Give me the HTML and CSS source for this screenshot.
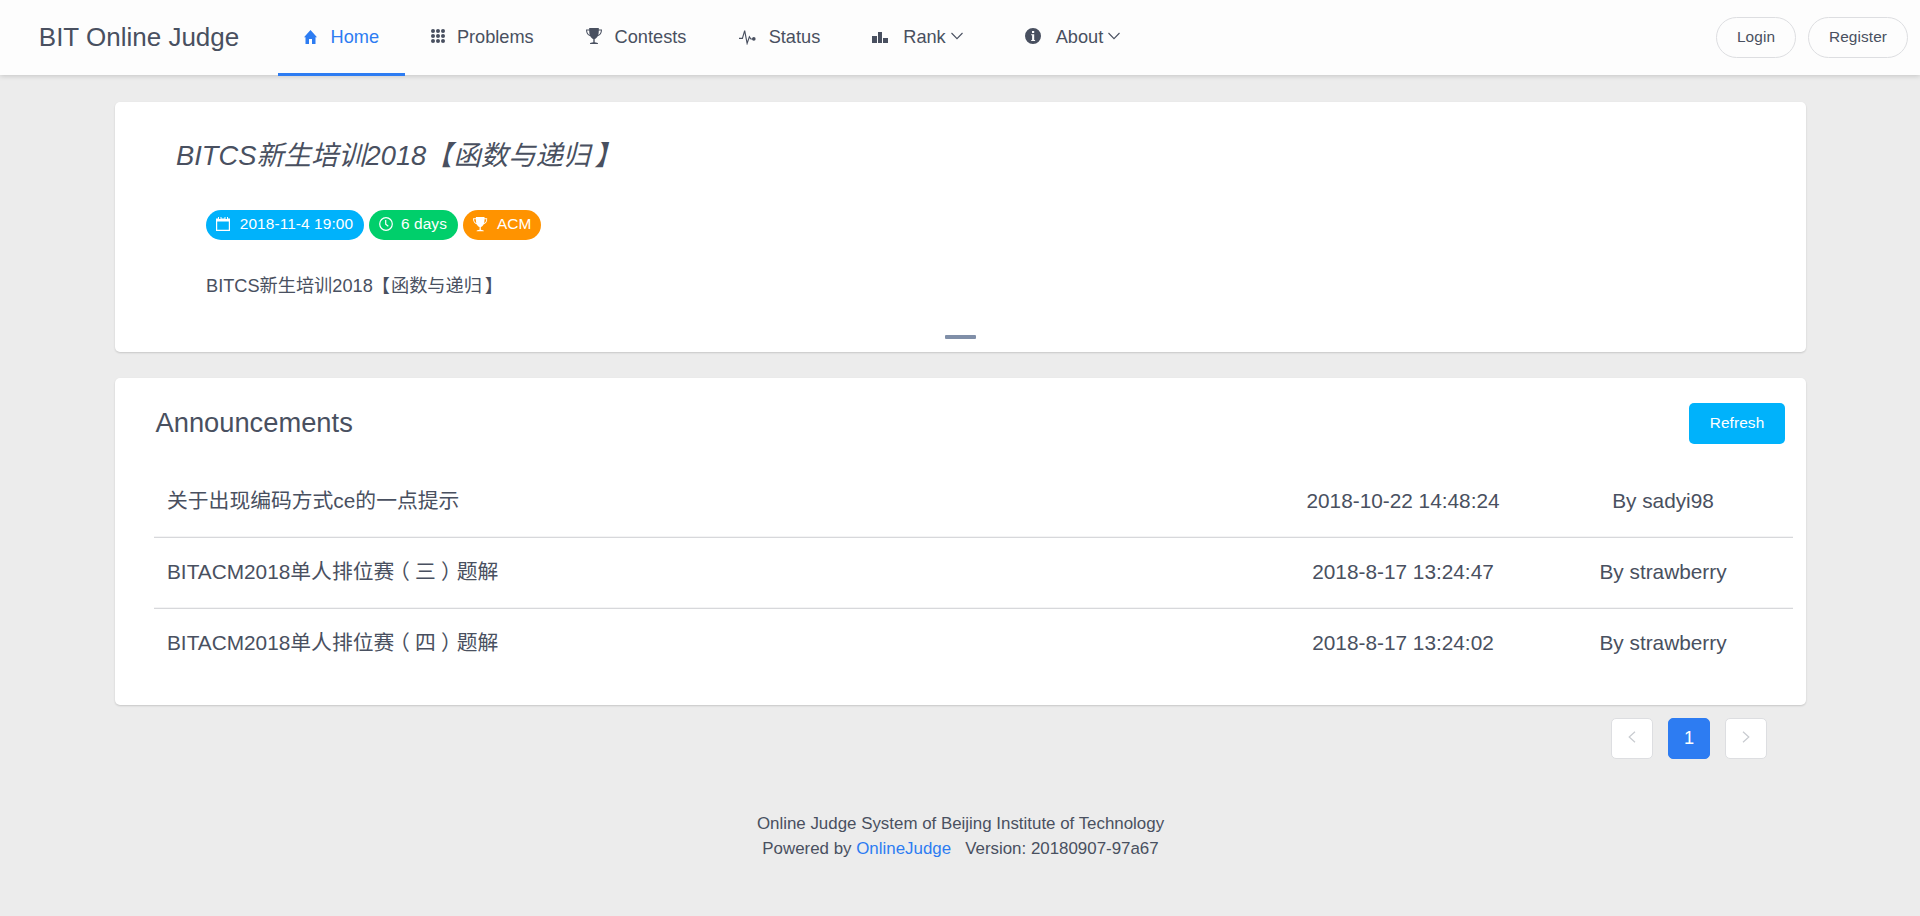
FILE: index.html
```html
<!DOCTYPE html>
<html lang="zh-CN">
<head>
<meta charset="utf-8">
<title>BIT Online Judge</title>
<link rel="stylesheet" href="styles.css">
</head>
<body>
<svg class="defs" width="0" height="0">
  <symbol id="trophy" viewBox="0 0 16 16"><path d="M3.2 0h9.6v1.5H16c0 3.600-1.500 6-4.300 6.700C10.900 9.700 9.700 10.700 8.700 11v3.200c1.700.1 3.300.6 3.300 1.400v.4H4v-.4c0-.8 1.600-1.300 3.300-1.400V11C6.300 10.700 5.100 9.700 4.300 8.200 1.500 7.500 0 5.100 0 1.500h3.200zM1.100 2.500c.2 2 1 3.600 2.600 4.400C3.300 5.600 3.200 4 3.200 2.500zm13.800 0h-2.100c0 1.500-.1 3.100-.5 4.400 1.600-.8 2.400-2.400 2.600-4.400z"/></symbol>
</svg>
<header class="header">
  <div class="brand">BIT Online Judge</div>
  <nav class="nav">
    <a class="item active"><svg class="icon home" viewBox="0 0 13 14"><path d="M6.500 0L13 7.200h-1.500V14H8V9H5v5H1.500V7.200H0z"/></svg>Home</a>
    <a class="item"><svg class="icon grid" viewBox="0 0 14 14"><g><circle cx="2" cy="2" r="2"/><circle cx="7" cy="2" r="2"/><circle cx="12" cy="2" r="2"/><circle cx="2" cy="7" r="2"/><circle cx="7" cy="7" r="2"/><circle cx="12" cy="7" r="2"/><circle cx="2" cy="12" r="2"/><circle cx="7" cy="12" r="2"/><circle cx="12" cy="12" r="2"/></g></svg>Problems</a>
    <a class="item"><svg class="icon cup"><use href="#trophy"/></svg>Contests</a>
    <a class="item"><svg class="icon pulse" viewBox="0 0 18 16"><path class="line" d="M0 9.500h3.600L6 1.200l2.600 13.600 2.400-7 1.600 2.300H15"/><circle cx="15.700" cy="10" r="1.900"/></svg>Status</a>
    <a class="item"><svg class="icon bars" viewBox="0 0 16 11"><path d="M0 4h5v7H0zM6 0h4v11H6zM11 6h5v5h-5z"/></svg>Rank<svg class="down" viewBox="0 0 12 8"><path class="line" d="M.5 1L6 6.700 11.500 1"/></svg></a>
    <a class="item about"><svg class="icon info" viewBox="0 0 16 16"><path fill-rule="evenodd" d="M8 0a8 8 0 1 0 0 16A8 8 0 0 0 8 0zM7 3h2.200v2H7zM6.200 6.200h3v5.800h.9v1H6.200v-1h.9V7.200h-.9z"/></svg>About<svg class="down" viewBox="0 0 12 8"><path class="line" d="M.5 1L6 6.700 11.500 1"/></svg></a>
  </nav>
  <div class="account"><button class="pill">Login</button><button class="pill">Register</button></div>
</header>
<main class="main">
  <section class="card contest">
    <h1 class="contest-title">BITCS新生培训2018<span class="open">【</span>函数与递归<span class="close">】</span></h1>
    <div class="tags">
      <span class="tag blue"><svg class="tag-icon" viewBox="0 0 14 14"><path fill-rule="evenodd" d="M0 1.500h2V0h1v2h1.500V0h1v1.500h3V0h1v2H11V0h1v1.500h2V14H0zM1.200 4.500v8.300h11.600V4.500z"/></svg>2018-11-4 19:00</span>
      <span class="tag green"><svg class="tag-icon" viewBox="0 0 14 14"><circle class="line" cx="7" cy="7" r="6.300"/><path class="line" d="M6.700 3v4.300l2.600 2"/></svg>6 days</span>
      <span class="tag orange"><svg class="tag-icon"><use href="#trophy"/></svg>ACM</span>
    </div>
    <p class="contest-text">BITCS新生培训2018<span class="open">【</span>函数与递归<span class="close">】</span></p>
    <div class="dot"></div>
  </section>
  <section class="card news">
    <div class="news-head"><h2 class="news-title">Announcements</h2><button class="refresh">Refresh</button></div>
    <ul class="list">
      <li class="row"><span class="name">关于出现编码方式ce的一点提示</span><span class="date">2018-10-22 14:48:24</span><span class="author">By sadyi98</span></li>
      <li class="row"><span class="name">BITACM2018单人排位赛<span class="paren">（</span>三<span class="paren">）</span>题解</span><span class="date">2018-8-17 13:24:47</span><span class="author">By strawberry</span></li>
      <li class="row"><span class="name">BITACM2018单人排位赛<span class="paren">（</span>四<span class="paren">）</span>题解</span><span class="date">2018-8-17 13:24:02</span><span class="author">By strawberry</span></li>
    </ul>
  </section>
  <div class="pager">
    <span class="page"><svg class="arrow" viewBox="0 0 8 12"><path class="line" d="M7 .8L1.200 6 7 11.200"/></svg></span>
    <span class="page current">1</span>
    <span class="page"><svg class="arrow" viewBox="0 0 8 12"><path class="line" d="M1 .8L6.800 6 1 11.200"/></svg></span>
  </div>
</main>
<footer class="footer">
  <p class="foot-line">Online Judge System of Beijing Institute of Technology</p>
  <p class="foot-line">Powered by <a class="link">OnlineJudge</a> &nbsp; Version: 20180907-97a67</p>
</footer>
</body>
</html>
```

FILE: styles.css
```css
* { box-sizing: border-box; }
body {
  margin: 0;
  min-height: 916px;
  background: #ececec;
  color: #495060;
  font-family: "Liberation Sans", "Noto Sans CJK SC", sans-serif;
  font-size: 18.2px;
}
h1, h2, p, ul { margin: 0; padding: 0; font-weight: 400; }
button { font-family: inherit; font-size: 15.4px; letter-spacing: .1px; padding: 0 0 2px; }
svg { fill: currentColor; flex: none; }
.defs { display: block; position: absolute; }
.line { fill: none; stroke: currentColor; stroke-width: 1.2; }
/* half-width punctuation, padded back to one em */
.open, .paren { font-feature-settings: "halt"; }
.open { padding: 0 .06em 0 .44em; }
.close { padding-left: .15em; }
.paren { padding: 0 .25em; }

.header {
  display: flex;
  height: 75px;
  padding: 0 12px 0 38.8px;
  background: #fdfdfd;
  box-shadow: 0 1px 5px rgba(0, 0, 0, .17);
}
.brand { width: 239.2px; line-height: 75px; font-size: 26px; }
.nav { display: flex; height: 76px; }
.item {
  display: flex;
  align-items: center;
  padding: 2px 26px 0;
  line-height: 71px;
  height: 76px;
  border-bottom: 3px solid transparent;
}
.active { color: #2d7cf2; border-color: #2d7cf2; }
.home { width: 13px; height: 14px; margin: 0 13.600px 2px 0; }
.grid { width: 14px; height: 14px; margin: 0 11.800px 3px 0; }
.cup { width: 16px; height: 16px; margin: 0 12.400px 3px .5px; }
.pulse { width: 17px; height: 16px; margin: 0 12.300px 2px 1px; }
.bars { width: 16px; height: 11px; margin: 0 15px 0 0; }
.info { width: 16px; height: 16px; margin: 0 15px 3px 0; }
.about { margin-left: 10px; }
.down { width: 12px; height: 8px; margin: 0 0 3px 5px; }
.down .line { stroke-width: 1.1; }
.account { display: flex; gap: 12px; margin: 17px 0 0 auto; }
.pill {
  width: 80px;
  height: 41px;
  border: 1px solid #dddee1;
  border-radius: 21px;
  background: transparent;
  color: #495060;
}
.pill + .pill { width: 100px; }

.main { padding: 27px 114px 0 115px; }
.card {
  background: #fff;
  border-radius: 5px;
  box-shadow: 0 1px 2px rgba(0, 0, 0, .16);
}
.contest { height: 250px; padding: 34px 61px 0; }
.contest-title { height: 40px; line-height: 40px; font-size: 27.3px; font-style: italic; }
.tags { display: flex; gap: 5px; margin: 34px 0 0 30px; }
.tag {
  display: flex;
  align-items: center;
  height: 30px;
  padding: 0 0 2px 10px;
  border-radius: 15px;
  color: #fff;
  font-size: 15.4px;
  letter-spacing: .1px;
  white-space: nowrap;
}
.blue { background: #00b2fb; width: 158px; }
.green { background: #00cf6b; width: 89px; }
.orange { background: #ff9300; width: 78px; }
.tag-icon { width: 14px; height: 14px; margin: 0 9.800px 1px 0; }
.orange .tag-icon { width: 16px; height: 16px; margin: 1px 8px 0 0; transform: scale(.9); transform-origin: 0 0; }
.green .tag-icon { margin-right: 8.500px; margin-left: -.500px; }
.contest-text { margin: 31px 0 0 30px; height: 30px; line-height: 30px; }
.dot { width: 31px; height: 4px; margin: 34px auto 0; border-radius: 1px; background: #808fa8; }

.news { height: 327px; margin-top: 26px; padding: 25px 13px 0 39px; }
.news-head { display: flex; justify-content: space-between; padding-right: 8px; }
.news-title { font-size: 27.3px; line-height: 40px; padding-left: 1.500px; }
.refresh { width: 96px; height: 41px; border: 0; border-radius: 5px; background: #00b2fb; color: #fff; }
.list { list-style: none; margin-top: 23px; }
.row {
  display: flex;
  align-items: baseline;
  height: 71px;
  padding: 19px 0 0 13px;
  font-size: 20.8px;
  line-height: 30px;
  border-bottom: 1px solid #d7d8db;
  box-shadow: inset 0 -1px #f4f4f5;
}
.row:last-child { border-bottom-color: transparent; box-shadow: none; }
.name { flex: 1; }
.date { width: 260px; text-align: center; }
.author { width: 260px; text-align: center; }

.pager { display: flex; gap: 15px; justify-content: flex-end; padding: 13px 39px 0 0; }
.page {
  display: flex;
  align-items: center;
  justify-content: center;
  width: 42px;
  height: 41px;
  border: 1px solid #dddee1;
  border-radius: 5px;
  background: #fff;
  color: #c8cbd0;
}
.current { background: #2d7cf2; border-color: #2d7cf2; color: #fff; }
.arrow { width: 8px; height: 12px; margin-bottom: 3px; }
.footer { margin-top: 52px; padding-left: 1px; text-align: center; }
.foot-line { font-size: 16.9px; line-height: 25px; }
.link { color: #2d7cf2; }
```
